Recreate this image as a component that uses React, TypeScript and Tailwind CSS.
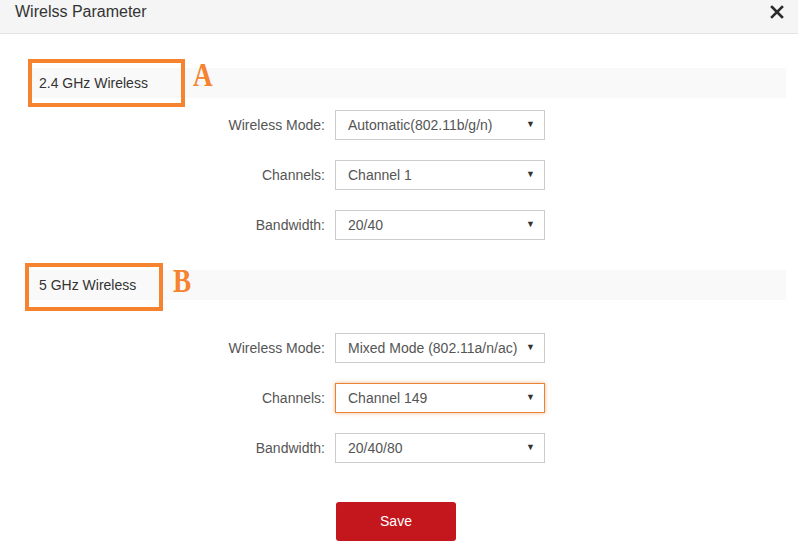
const font = { fontFamily: '"Liberation Sans", Arial, sans-serif' };

type Row = { label: string; value: string; focused?: boolean };

function SelectRow({ label, value, focused }: Row) {
  return (
    <div className="flex items-center h-[30px]">
      <div className="w-[326px] pr-[1px] text-right text-[14px] text-[#555]">{label}</div>
      <div
        className={
          focused
            ? "ml-[9px] w-[210px] h-[30px] flex items-center justify-between pl-[12px] pr-[9px] bg-white border border-[#e8833a] shadow-[0_0_4px_rgba(232,131,58,0.6)]"
            : "ml-[9px] w-[210px] h-[30px] flex items-center justify-between pl-[12px] pr-[9px] bg-white border border-[#cccccc]"
        }
      >
        <span className="text-[14px] text-[#555]">{value}</span>
        <span className="text-[9px] text-[#333]">▼</span>
      </div>
    </div>
  );
}

function Band({
  title,
  letter,
  boxClass,
  letterClass,
}: {
  title: string;
  letter: string;
  boxClass: string;
  letterClass: string;
}) {
  return (
    <div className="relative ml-[28px] mr-[12px] h-[30px] bg-[#f9f9f9] flex items-center">
      <span className="pl-[11px] text-[14px] text-[#333]">{title}</span>
      <div className={boxClass} />
      <span
        className={letterClass}
        style={{ fontFamily: '"Liberation Serif", "Times New Roman", serif' }}
      >
        {letter}
      </span>
    </div>
  );
}

export default function App() {
  const a: Row[] = [
    { label: "Wireless Mode:", value: "Automatic(802.11b/g/n)" },
    { label: "Channels:", value: "Channel 1" },
    { label: "Bandwidth:", value: "20/40" },
  ];
  const b: Row[] = [
    { label: "Wireless Mode:", value: "Mixed Mode (802.11a/n/ac)" },
    { label: "Channels:", value: "Channel 149", focused: true },
    { label: "Bandwidth:", value: "20/40/80" },
  ];
  return (
    <div className="w-[798px] h-[555px] bg-white overflow-hidden" style={font}>
      <div className="h-[34px] bg-[#f5f5f5] border-b border-[#e3e3e3] flex items-start justify-between pl-[15px] pr-[14px]">
        <span className="text-[16px] text-[#333]">Wirelss Parameter</span>
        <svg width="14" height="14" viewBox="0 0 14 14" className="mt-[5px]">
          <path d="M2 2 L12 12 M12 2 L2 12" stroke="#2b2b2b" strokeWidth="2.6" strokeLinecap="square" />
        </svg>
      </div>

      <div className="mt-[34px]">
        <Band
          title="2.4 GHz Wireless"
          letter="A"
          boxClass="absolute left-0 top-[-9px] w-[157px] h-[48px] border-[4px] border-[#f5832f]"
          letterClass="absolute left-[165px] top-[-10px] text-[34px] font-bold text-[#f5832f] leading-none scale-x-[0.8] origin-left"
        />
        <div className="mt-[12px] flex flex-col gap-[20px]">
          {a.map((r) => (
            <SelectRow key={r.label} {...r} />
          ))}
        </div>
      </div>

      <div className="mt-[30px]">
        <Band
          title="5 GHz Wireless"
          letter="B"
          boxClass="absolute left-[-3px] top-[-7px] w-[138px] h-[48px] border-[4px] border-[#f5832f]"
          letterClass="absolute left-[145px] top-[-6px] text-[34px] font-bold text-[#f5832f] leading-none scale-x-[0.8] origin-left"
        />
        <div className="mt-[33px] flex flex-col gap-[20px]">
          {b.map((r) => (
            <SelectRow key={r.label} {...r} />
          ))}
        </div>
      </div>

      <div className="mt-[39px] pl-[336px]">
        <button className="w-[120px] h-[39px] rounded-[3px] bg-[#c3161d] text-white text-[14px]">
          Save
        </button>
      </div>
    </div>
  );
}
